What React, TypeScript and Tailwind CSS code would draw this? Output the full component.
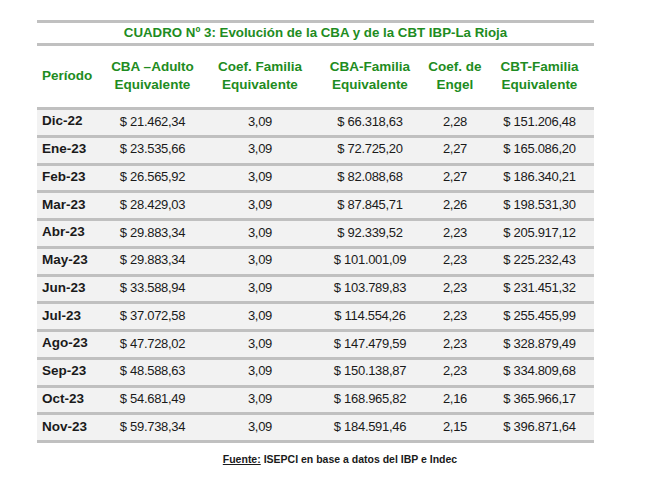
const rows = [
  ["Dic-22", "$ 21.462,34", "3,09", "$ 66.318,63", "2,28", "$ 151.206,48"],
  ["Ene-23", "$ 23.535,66", "3,09", "$ 72.725,20", "2,27", "$ 165.086,20"],
  ["Feb-23", "$ 26.565,92", "3,09", "$ 82.088,68", "2,27", "$ 186.340,21"],
  ["Mar-23", "$ 28.429,03", "3,09", "$ 87.845,71", "2,26", "$ 198.531,30"],
  ["Abr-23", "$ 29.883,34", "3,09", "$ 92.339,52", "2,23", "$ 205.917,12"],
  ["May-23", "$ 29.883,34", "3,09", "$ 101.001,09", "2,23", "$ 225.232,43"],
  ["Jun-23", "$ 33.588,94", "3,09", "$ 103.789,83", "2,23", "$ 231.451,32"],
  ["Jul-23", "$ 37.072,58", "3,09", "$ 114.554,26", "2,23", "$ 255.455,99"],
  ["Ago-23", "$ 47.728,02", "3,09", "$ 147.479,59", "2,23", "$ 328.879,49"],
  ["Sep-23", "$ 48.588,63", "3,09", "$ 150.138,87", "2,23", "$ 334.809,68"],
  ["Oct-23", "$ 54.681,49", "3,09", "$ 168.965,82", "2,16", "$ 365.966,17"],
  ["Nov-23", "$ 59.738,34", "3,09", "$ 184.591,46", "2,15", "$ 396.871,64"],
]

const headers = [
  ["CBA –Adulto", "Equivalente"],
  ["Coef. Familia", "Equivalente"],
  ["CBA-Familia", "Equivalente"],
  ["Coef. de", "Engel"],
  ["CBT-Familia", "Equivalente"],
]

const cols = "grid grid-cols-[63px_105px_110px_110px_60px_109px]"

export default function App() {
  return (
    <div
      className="w-[665px] h-[491px] bg-white pt-[20px] pl-[37px]"
      style={{ fontFamily: '"Liberation Sans", Arial, sans-serif' }}
    >
      <div className="w-[557px]">
        {/* title */}
        <div className="border-t-[3px] border-b-[3px] border-[#c0c0c0] h-[26px] flex items-center justify-center pb-[1px] text-[13.3px] font-bold text-[#1e8c22]">
          CUADRO Nº 3: Evolución de la CBA y de la CBT IBP-La Rioja
        </div>

        {/* header */}
        <div className={`${cols} h-[61px] items-center pb-[1px] text-[13.5px] font-bold text-[#1e8c22] leading-[18px]`}>
          <div className="pl-[5px]">Período</div>
          {headers.map((h) => (
            <div key={h[0]} className="text-center">
              <div>{h[0]}</div>
              <div>{h[1]}</div>
            </div>
          ))}
        </div>

        {/* body */}
        <div className="border-b-[3px] border-[#c0c0c0]">
          {rows.map((r) => (
            <div
              key={r[0]}
              className={`${cols} h-[27.75px] border-t-[3px] border-[#c0c0c0] bg-[#f2f2f2] items-center pb-[2px] text-[13px] text-[#1a1a1a]`}
            >
              <div className="pl-[5px] font-bold text-[13.5px]">{r[0]}</div>
              {r.slice(1).map((v, i) => (
                <div key={i} className="text-center tracking-[-0.3px]">
                  {v}
                </div>
              ))}
            </div>
          ))}
        </div>

        {/* source */}
        <div className="mt-[9px] pl-[49px] text-center text-[10.5px] font-bold text-[#1a1a1a]">
          <span className="underline">Fuente:</span> ISEPCI en base a datos del IBP e Indec
        </div>
      </div>
    </div>
  )
}
